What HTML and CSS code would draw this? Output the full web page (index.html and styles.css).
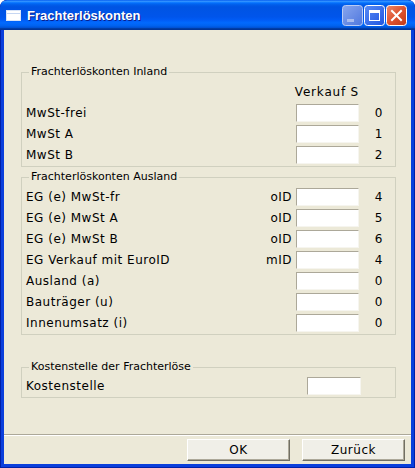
FILE: index.html
```html
<!DOCTYPE html>
<html>
<head>
<meta charset="utf-8">
<link rel="stylesheet" href="styles.css">
</head>
<body>
<div class="window">
  <div class="titlebar">
    <svg class="app-icon" width="15" height="11" viewBox="0 0 15 11">
      <rect x="0.5" y="0.5" width="14" height="10" fill="#ffffff" stroke="#d8e4f8"/>
      <rect x="1" y="1" width="13" height="2" fill="#ffffff"/>
      <rect x="1" y="3" width="13" height="1" fill="#c6d6f2"/>
    </svg>
    <span class="title">Frachterlöskonten</span>
    <div class="controls">
      <svg class="ctl" width="21" height="21" viewBox="0 0 21 21">
        <defs><linearGradient id="gmin" x1="0" y1="0" x2="1" y2="1"><stop offset="0" stop-color="#88a6ee"/><stop offset="1" stop-color="#4f77de"/></linearGradient></defs>
        <rect x="0.5" y="0.5" width="20" height="20" rx="3" fill="url(#gmin)" stroke="#b9cbf4"/>
        <rect x="5" y="14" width="7" height="3" fill="#a9bcef"/>
      </svg>
      <svg class="ctl" width="21" height="21" viewBox="0 0 21 21">
        <defs><linearGradient id="gmax" x1="0" y1="0" x2="1" y2="1"><stop offset="0" stop-color="#5a8cf5"/><stop offset="1" stop-color="#1f55e0"/></linearGradient></defs>
        <rect x="0.5" y="0.5" width="20" height="20" rx="3" fill="url(#gmax)" stroke="#ffffff"/>
        <rect x="5.5" y="5.5" width="10" height="10" fill="none" stroke="#ffffff"/>
        <rect x="5" y="5" width="11" height="3" fill="#ffffff"/>
      </svg>
      <svg class="ctl" width="21" height="21" viewBox="0 0 21 21">
        <defs><linearGradient id="gcls" x1="0" y1="0" x2="1" y2="1"><stop offset="0" stop-color="#ee8a6a"/><stop offset="0.5" stop-color="#de5330"/><stop offset="1" stop-color="#c23a17"/></linearGradient></defs>
        <rect x="0.5" y="0.5" width="20" height="20" rx="3" fill="url(#gcls)" stroke="#ffffff"/>
        <path d="M6 6 L15 15 M15 6 L6 15" stroke="#ffffff" stroke-width="2" stroke-linecap="square"/>
      </svg>
    </div>
  </div>
  <div class="client">
    <fieldset class="group g1">
      <legend>Frachterlöskonten Inland</legend>
      <div class="head">Verkauf S</div>
      <div class="row"><span class="lbl">MwSt-frei</span><span class="tag"></span><span class="inp"></span><span class="num">0</span></div>
      <div class="row"><span class="lbl">MwSt A</span><span class="tag"></span><span class="inp"></span><span class="num">1</span></div>
      <div class="row"><span class="lbl">MwSt B</span><span class="tag"></span><span class="inp"></span><span class="num">2</span></div>
    </fieldset>
    <fieldset class="group g2">
      <legend>Frachterlöskonten Ausland</legend>
      <div class="row"><span class="lbl">EG (e) MwSt-fr</span><span class="tag">oID</span><span class="inp"></span><span class="num">4</span></div>
      <div class="row"><span class="lbl">EG (e) MwSt A</span><span class="tag">oID</span><span class="inp"></span><span class="num">5</span></div>
      <div class="row"><span class="lbl">EG (e) MwSt B</span><span class="tag">oID</span><span class="inp"></span><span class="num">6</span></div>
      <div class="row"><span class="lbl">EG Verkauf mit EuroID</span><span class="tag">mID</span><span class="inp"></span><span class="num">4</span></div>
      <div class="row"><span class="lbl">Ausland (a)</span><span class="tag"></span><span class="inp"></span><span class="num">0</span></div>
      <div class="row"><span class="lbl">Bauträger (u)</span><span class="tag"></span><span class="inp"></span><span class="num">0</span></div>
      <div class="row"><span class="lbl">Innenumsatz (i)</span><span class="tag"></span><span class="inp"></span><span class="num">0</span></div>
    </fieldset>
    <fieldset class="group g3">
      <legend>Kostenstelle der Frachterlöse</legend>
      <div class="row single"><span class="lbl">Kostenstelle</span><span class="inp"></span></div>
    </fieldset>
    <div class="footer">
      <div class="buttons">
        <button class="btn">OK</button>
        <button class="btn">Zurück</button>
      </div>
    </div>
  </div>
</div>
</body>
</html>
```
FILE: styles.css
```css
html, body {
  margin: 0;
  padding: 0;
  background: #ffffff;
}
.window {
  width: 415px;
  height: 468px;
  background: #0a3fdc;
  border-radius: 7px 7px 0 0;
  box-shadow: inset 0 0 0 1px #0020a8;
  overflow: hidden;
  display: flex;
  flex-direction: column;
}
.titlebar {
  height: 30px;
  flex: none;
  display: flex;
  align-items: flex-start;
  background: linear-gradient(to bottom, #0058ee 0%, #3593ff 4%, #288eff 6%, #127dff 8%, #036ffc 10%, #0262ee 14%, #0057e5 20%, #0054e3 24%, #0055eb 56%, #005bf5 66%, #026afe 76%, #0062ef 86%, #0052d6 92%, #0040ab 94%, #003092 100%);
  border-radius: 7px 7px 0 0;
}
.app-icon {
  margin: 10px 0 0 6px;
  flex: none;
}
.title {
  margin: 8px 0 0 6px;
  font-family: "Liberation Sans", Arial, sans-serif;
  font-weight: bold;
  font-size: 13px;
  line-height: 15px;
  color: #ffffff;
  text-shadow: 1px 1px 0 #0a1e8c;
  flex: 1;
}
.controls {
  display: flex;
  gap: 1px;
  margin: 5px 8px 0 0;
}
.ctl {
  display: block;
}
.client {
  margin: 0 4px 4px 4px;
  height: 434px;
  background: #ece9d8;
  display: flex;
  flex-direction: column;
  font-family: "DejaVu Sans", Verdana, sans-serif;
  font-size: 12px;
  color: #000000;
}
.group {
  margin: 0 15px 0 17px;
  padding: 3px 12px 0 4px;
  border: 1px solid #d0d0bf;
  min-width: 0;
}
.group legend {
  font-size: 11px;
  line-height: 12px;
  letter-spacing: 0;
  padding: 0 2px;
  margin-left: 3px;
  color: #000000;
}
.g1 { margin-top: 36px; }
.g2 { margin-top: 4px; padding-top: 4px; }
.g3 { margin-top: 26px; }
.head {
  height: 22px;
  display: flex;
  align-items: center;
  justify-content: flex-end;
  padding-right: 24px;
  letter-spacing: 0.8px;
}
.row {
  height: 21px;
  display: grid;
  grid-template-columns: 1fr auto 63px 24px;
  align-items: start;
  line-height: 21px;
  letter-spacing: 0.5px;
}
.row.single {
  grid-template-columns: 1fr 54px 22px;
}
.lbl {
  white-space: nowrap;
}
.tag {
  padding-right: 4px;
  text-align: right;
}
.inp {
  display: block;
  height: 18px;
  margin-top: 1px;
  box-sizing: border-box;
  background: #ffffff;
  border-top: 1px solid #aca899;
  border-left: 1px solid #aca899;
  border-right: 1px solid #f6f5ef;
  border-bottom: 1px solid #f6f5ef;
}
.num {
  text-align: right;
}
.footer {
  margin-top: auto;
  border-top: 1px solid #aca899;
  box-shadow: inset 0 1px 0 #ffffff;
  padding: 4px 6px 3px 0;
}
.buttons {
  display: flex;
  justify-content: flex-end;
  gap: 12px;
}
.btn {
  width: 103px;
  height: 22px;
  margin: 0;
  padding: 0;
  font-family: "DejaVu Sans", Verdana, sans-serif;
  font-size: 12px;
  letter-spacing: 0.5px;
  color: #000000;
  background: #f0efe8;
  border: 1px solid;
  border-color: #ffffff #716f64 #716f64 #ffffff;
  box-shadow: inset -1px -1px 0 #aca899;
  border-radius: 0;
}
```
